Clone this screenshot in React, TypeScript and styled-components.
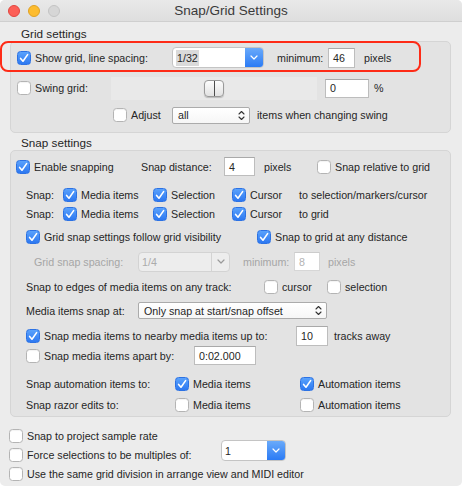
import React from 'react';
import styled, { createGlobalStyle, css } from 'styled-components';

const Global = createGlobalStyle`
  html, body { margin: 0; padding: 0; background: #ffffff; }
  body { font-family: "Liberation Sans", Arial, sans-serif; }
  #root { width: 462px; height: 486px; }
`;

const Window = styled.div`
  position: relative;
  width: 462px;
  height: 486px;
  box-sizing: border-box;
  background: #ececec;
  border-radius: 5px;
  overflow: hidden;
  display: flex;
  flex-direction: column;
  color: #262626;
  font-size: 10.7px;
  line-height: 14px;
`;

const TitleBar = styled.div`
  flex: none;
  height: 22px;
  box-sizing: border-box;
  display: grid;
  grid-template-columns: 1fr auto 1fr;
  align-items: center;
  padding: 0 8px;
  background: linear-gradient(#e9e9e9, #dedede);
  border-bottom: 1px solid #cfcfcf;
`;

const Lights = styled.div`
  display: flex;
  gap: 8px;
`;

const lightColors = {
  red: ['#fc5f57', '#e1453f'],
  yellow: ['#fdbc2e', '#dfa124'],
  gray: ['#d6d6d6', '#c3c3c3'],
} as const;

const Light = styled.span<{ $c: keyof typeof lightColors }>`
  width: 12px;
  height: 12px;
  box-sizing: border-box;
  border-radius: 50%;
  background: ${p => lightColors[p.$c][0]};
  border: 0.5px solid ${p => lightColors[p.$c][1]};
`;

const Title = styled.div`
  font-size: 13.5px;
  color: #3a3a3a;
`;

const SectionLabel = styled.div<{ $pt: number }>`
  flex: none;
  padding: ${p => p.$pt}px 0 0 21px;
  font-size: 11.7px;
  line-height: 14px;
  color: #262626;
`;

const Group = styled.div<{ $pt: number; $pb: number }>`
  flex: none;
  margin: 0 11px 0 10px;
  border: 1px solid #d5d5d5;
  border-radius: 5px;
  background: #e3e3e3;
  padding: ${p => p.$pt}px 0 ${p => p.$pb}px 0;
  display: flex;
  flex-direction: column;
`;

const Row = styled.div<{ $h: number; $mt?: number; $pl: number }>`
  flex: none;
  display: flex;
  align-items: center;
  height: ${p => p.$h}px;
  margin-top: ${p => p.$mt ?? 0}px;
  padding-left: ${p => p.$pl}px;
  white-space: nowrap;
`;

const Col = styled.div<{ $w: number; $pl?: number }>`
  flex: none;
  width: ${p => p.$w}px;
  box-sizing: border-box;
  padding-left: ${p => p.$pl ?? 0}px;
  display: flex;
  align-items: center;
`;

const Text = styled.span<{ $disabled?: boolean; $ml?: number }>`
  color: ${p => (p.$disabled ? '#a6a6a6' : '#262626')};
  margin-left: ${p => p.$ml ?? 0}px;
`;

const CheckLabel = styled.span`
  display: inline-flex;
  align-items: center;
  gap: 4px;
`;

const Box = styled.span<{ $on: boolean }>`
  flex: none;
  width: 14px;
  height: 14px;
  box-sizing: border-box;
  border-radius: 3.5px;
  display: inline-flex;
  align-items: center;
  justify-content: center;
  ${p =>
    p.$on
      ? css`
          background: linear-gradient(#5aa2fc, #2d78f1);
          border: 1px solid #2c72e4;
        `
      : css`
          background: #ffffff;
          border: 1px solid #b4b4b4;
          box-shadow: inset 0 1px 1px rgba(0, 0, 0, 0.05);
        `}
`;

const Check: React.FC<{ on?: boolean; label: string }> = ({ on = false, label }) => (
  <CheckLabel>
    <Box $on={on}>
      {on && (
        <svg width="12" height="12" viewBox="0 0 12 12">
          <path d="M2.6 6.4 L5 9.2 L9.6 2.6" fill="none" stroke="#fff" strokeWidth="1.6" strokeLinecap="round" strokeLinejoin="round" />
        </svg>
      )}
    </Box>
    <Text>{label}</Text>
  </CheckLabel>
);

const Field = styled.div<{ $w: number; $h: number; $disabled?: boolean }>`
  flex: none;
  width: ${p => p.$w}px;
  height: ${p => p.$h}px;
  box-sizing: border-box;
  padding-left: 4px;
  display: flex;
  align-items: center;
  background: #ffffff;
  border: 1px solid ${p => (p.$disabled ? '#d6d6d6' : '#bdbdbd')};
  border-top-color: ${p => (p.$disabled ? '#cccccc' : '#a9a9a9')};
  color: ${p => (p.$disabled ? '#b3b3b3' : '#262626')};
`;

const Popup = styled.div<{ $w: number; $h: number; $mb?: number }>`
  flex: none;
  width: ${p => p.$w}px;
  height: ${p => p.$h}px;
  margin-bottom: ${p => p.$mb ?? 0}px;
  box-sizing: border-box;
  display: flex;
  border-radius: 4px;
  background: #ffffff;
  border: 1px solid #c4c4c4;
  overflow: hidden;
`;

const PopupValue = styled.span`
  flex: 1;
  display: flex;
  align-items: center;
  padding-left: 3px;
`;

const Highlight = styled.span`
  background: #dadada;
  padding: 1px 1px;
`;

const PopupArrow = styled.span`
  flex: none;
  width: 18px;
  display: flex;
  align-items: center;
  justify-content: center;
  background: linear-gradient(#6aaafa, #2b7bf5);
`;

const Stepper = styled.div<{ $w: number; $h: number }>`
  flex: none;
  width: ${p => p.$w}px;
  height: ${p => p.$h}px;
  box-sizing: border-box;
  display: flex;
  align-items: center;
  justify-content: space-between;
  padding: 0 4px 0 5px;
  background: linear-gradient(#ffffff, #f6f6f6);
  border: 1px solid #ababab;
  border-radius: 2px;
`;

const DisabledSelect = styled.div<{ $w: number; $h: number }>`
  flex: none;
  width: ${p => p.$w}px;
  height: ${p => p.$h}px;
  box-sizing: border-box;
  display: flex;
  background: #ededed;
  border: 1px solid #d3d3d3;
  border-radius: 4px;
  color: #ababab;
`;

const DisabledArrow = styled.span`
  flex: none;
  width: 17px;
  display: flex;
  align-items: center;
  justify-content: center;
  border-left: 1px solid #d3d3d3;
`;

const SliderTrack = styled.div`
  flex: none;
  width: 206px;
  height: 23px;
  display: flex;
  align-items: center;
  justify-content: center;
  background: #e9e9e9;
`;

const Thumb = styled.div`
  width: 20px;
  height: 17px;
  box-sizing: border-box;
  border-radius: 4px;
  border: 1px solid #9a9a9a;
  background: linear-gradient(#fdfdfd, #e2e2e2);
  box-shadow: 0 1px 1px rgba(0, 0, 0, 0.2);
  display: flex;
  justify-content: center;
`;

const ThumbLine = styled.span`
  width: 1px;
  background: #4d4d4d;
`;

const Annotation = styled.div`
  position: absolute;
  left: 0;
  top: 41px;
  width: 421px;
  height: 31px;
  box-sizing: border-box;
  border: 2.5px solid #fe2b17;
  border-radius: 8px;
  pointer-events: none;
`;

const ChevronDown: React.FC<{ color: string }> = ({ color }) => (
  <svg width="8" height="5" viewBox="0 0 8 5">
    <path d="M1 1 L4 4 L7 1" fill="none" stroke={color} strokeWidth="1.2" strokeLinecap="round" strokeLinejoin="round" />
  </svg>
);

const UpDown = () => (
  <svg width="7" height="11" viewBox="0 0 7 11">
    <path d="M1 4 L3.5 1.5 L6 4 M1 7 L3.5 9.5 L6 7" fill="none" stroke="#333" strokeWidth="1.1" strokeLinecap="round" strokeLinejoin="round" />
  </svg>
);

export default function App() {
  return (
    <>
      <Global />
      <Window>
        <TitleBar>
          <Lights>
            <Light $c="red" />
            <Light $c="yellow" />
            <Light $c="gray" />
          </Lights>
          <Title>Snap/Grid Settings</Title>
          <span />
        </TitleBar>

        <SectionLabel $pt={5}>Grid settings</SectionLabel>
        <Group $pt={3} $pb={7}>
          <Row $h={25} $pl={6}>
            <Col $w={155}><Check on label="Show grid, line spacing:" /></Col>
            <Popup $w={92} $h={21}>
              <PopupValue><Highlight>1/32</Highlight></PopupValue>
              <PopupArrow><ChevronDown color="#fff" /></PopupArrow>
            </Popup>
            <Col $w={64} $pl={13}><Text>minimum:</Text></Col>
            <Field $w={27} $h={20}>46</Field>
            <Text $ml={9}>pixels</Text>
          </Row>
          <Row $h={24} $mt={6} $pl={6}>
            <Col $w={94}><Check label="Swing grid:" /></Col>
            <SliderTrack>
              <Thumb><ThumbLine /></Thumb>
            </SliderTrack>
            <Col $w={8} />
            <Field $w={44} $h={19}>0</Field>
            <Text $ml={5}>%</Text>
          </Row>
          <Row $h={20} $mt={5} $pl={102}>
            <Col $w={59}><Check label="Adjust" /></Col>
            <Stepper $w={78} $h={17}>
              <span>all</span>
              <UpDown />
            </Stepper>
            <Text $ml={7}>items when changing swing</Text>
          </Row>
        </Group>

        <SectionLabel $pt={3}>Snap settings</SectionLabel>
        <Group $pt={5} $pb={2}>
          <Row $h={21} $pl={5}>
            <Col $w={125}><Check on label="Enable snapping" /></Col>
            <Col $w={83}><Text>Snap distance:</Text></Col>
            <Field $w={31} $h={19}>4</Field>
            <Col $w={62} $pl={9}><Text>pixels</Text></Col>
            <Check label="Snap relative to grid" />
          </Row>
          <Row $h={19} $mt={8} $pl={15}>
            <Col $w={37}><Text>Snap:</Text></Col>
            <Col $w={90}><Check on label="Media items" /></Col>
            <Col $w={79}><Check on label="Selection" /></Col>
            <Col $w={67}><Check on label="Cursor" /></Col>
            <Text>to selection/markers/cursor</Text>
          </Row>
          <Row $h={19} $pl={15}>
            <Col $w={37}><Text>Snap:</Text></Col>
            <Col $w={90}><Check on label="Media items" /></Col>
            <Col $w={79}><Check on label="Selection" /></Col>
            <Col $w={67}><Check on label="Cursor" /></Col>
            <Text>to grid</Text>
          </Row>
          <Row $h={18} $mt={5} $pl={15}>
            <Col $w={231}><Check on label="Grid snap settings follow grid visibility" /></Col>
            <Check on label="Snap to grid at any distance" />
          </Row>
          <Row $h={21} $mt={5} $pl={23}>
            <Col $w={104}><Text $disabled>Grid snap spacing:</Text></Col>
            <DisabledSelect $w={92} $h={20}>
              <PopupValue>1/4</PopupValue>
              <DisabledArrow><ChevronDown color="#9a9a9a" /></DisabledArrow>
            </DisabledSelect>
            <Col $w={64} $pl={13}><Text $disabled>minimum:</Text></Col>
            <Field $w={26} $h={19} $disabled>8</Field>
            <Text $disabled $ml={8}>pixels</Text>
          </Row>
          <Row $h={18} $mt={6} $pl={15}>
            <Col $w={238}><Text>Snap to edges of media items on any track:</Text></Col>
            <Col $w={63}><Check label="cursor" /></Col>
            <Check label="selection" />
          </Row>
          <Row $h={19} $mt={5} $pl={15}>
            <Col $w={112}><Text>Media items snap at:</Text></Col>
            <Stepper $w={189} $h={17}>
              <span>Only snap at start/snap offset</span>
              <UpDown />
            </Stepper>
          </Row>
          <Row $h={20} $mt={6} $pl={15}>
            <Col $w={270}><Check on label="Snap media items to nearby media items up to:" /></Col>
            <Field $w={32} $h={20}>10</Field>
            <Text $ml={6}>tracks away</Text>
          </Row>
          <Row $h={19} $pl={15}>
            <Col $w={168}><Check label="Snap media items apart by:" /></Col>
            <Field $w={62} $h={19}>0:02.000</Field>
          </Row>
          <Row $h={18} $mt={10} $pl={15}>
            <Col $w={149}><Text>Snap automation items to:</Text></Col>
            <Col $w={125}><Check on label="Media items" /></Col>
            <Check on label="Automation items" />
          </Row>
          <Row $h={18} $mt={3} $pl={15}>
            <Col $w={149}><Text>Snap razor edits to:</Text></Col>
            <Col $w={125}><Check label="Media items" /></Col>
            <Check label="Automation items" />
          </Row>
        </Group>

        <Row $h={18} $mt={10} $pl={9}>
          <Check label="Snap to project sample rate" />
        </Row>
        <Row $h={19} $pl={9}>
          <Col $w={212}><Check label="Force selections to be multiples of:" /></Col>
          <Popup $w={65} $h={21} $mb={8}>
            <PopupValue>1</PopupValue>
            <PopupArrow><ChevronDown color="#fff" /></PopupArrow>
          </Popup>
        </Row>
        <Row $h={19} $pl={9}>
          <Check label="Use the same grid division in arrange view and MIDI editor" />
        </Row>

        <Annotation />
      </Window>
    </>
  );
}
